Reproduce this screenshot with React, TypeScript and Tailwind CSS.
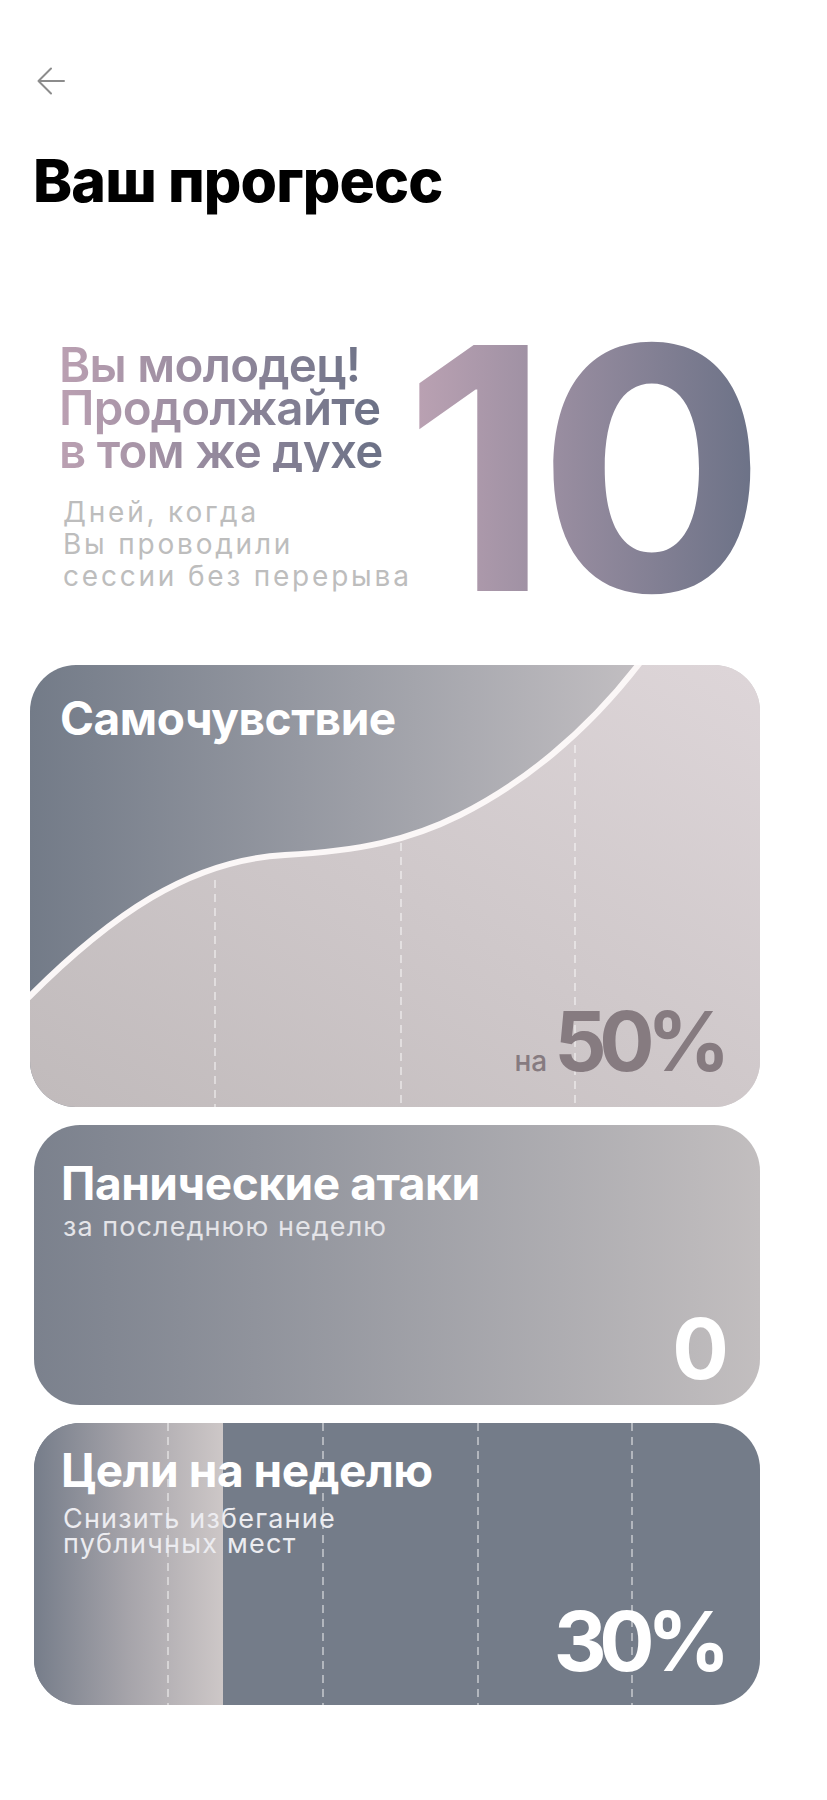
export default function App() {
  const curve =
    "M-5,336 C80,250 160,195 255,190 C330,186 380,175 430,150 C490,120 555,70 612,-5";
  return (
    <div className="w-[827px] min-h-[1800px] bg-white font-[family-name:Inter,sans-serif]">
      <div className="pt-[67px] pl-[37px]">
        <svg width="28" height="28" viewBox="0 0 28 28" fill="none" stroke="#8c8c8c" strokeWidth="2" strokeLinecap="round" strokeLinejoin="round">
          <path d="M27 14H1.5M14 1.5L1.5 14L14 26.5" />
        </svg>
      </div>
      <h1 className="mt-[57px] ml-[33px] font-extrabold text-[59px] leading-[58px] text-black tracking-[-0.015em]">
        Ваш прогресс
      </h1>

      <div className="mt-[92px] flex">
        <div className="ml-[59px] w-[345px] shrink-0 pt-[41px]">
          <div className="w-fit whitespace-nowrap text-[47.5px] leading-[43px] font-semibold tracking-[-0.015em] bg-linear-to-r from-[#bba0b2] to-[#6b7186] bg-clip-text text-transparent">
            Вы молодец!
            <br />
            Продолжайте
            <br />
            в том же духе
          </div>
          <div className="mt-[24px] ml-[4px] whitespace-nowrap text-[28px] leading-[32px] text-[#bdbdbd] tracking-[0.1em]">
            Дней, когда
            <br />
            Вы проводили
            <br />
            сессии без перерыва
          </div>
        </div>
        <div className="-mt-[2px] text-[338px] leading-[338px] font-bold tracking-[-0.035em] bg-linear-to-r from-[#bda3b4] to-[#6c7287] bg-clip-text text-transparent">
          10
        </div>
      </div>

      <div className="mt-[27px] flex flex-col gap-[18px]">
        <div className="relative ml-[30px] w-[730px] h-[442px] rounded-[46px] overflow-hidden bg-linear-to-r from-[#737b88] to-[#d2cccd]">
          <svg className="absolute inset-0" width="730" height="442" viewBox="0 0 730 442">
            <defs>
              <linearGradient id="low" x1="0" y1="1" x2="1" y2="0">
                <stop offset="0" stopColor="#c0babb" />
                <stop offset="1" stopColor="#ded6d9" />
              </linearGradient>
            </defs>
            <path d={curve + " L740,-5 L740,450 L-5,450 Z"} fill="url(#low)" />
            <g stroke="#ffffff" strokeOpacity="0.75" strokeWidth="1.2" strokeDasharray="8 6">
              <line x1="185" y1="215" x2="185" y2="442" />
              <line x1="371" y1="178" x2="371" y2="442" />
              <line x1="545" y1="80" x2="545" y2="442" />
            </g>
            <path d={curve} fill="none" stroke="#fbf7f7" strokeWidth="6" />
          </svg>
          <div className="relative flex h-full flex-col justify-between pt-[31px] pl-[30px] pr-[37px] pb-[24px]">
            <div className="text-[46px] leading-[45px] font-bold tracking-[-0.01em] text-white">Самочувствие</div>
            <div className="flex items-baseline justify-end gap-[7px] text-[#867b80]">
              <span className="text-[28px] font-medium">на</span>
              <span className="text-[82px] leading-[82px] font-bold tracking-[-0.09em]">50%</span>
            </div>
          </div>
        </div>

        <div className="ml-[34px] w-[726px] h-[280px] rounded-[46px] bg-linear-to-r from-[#7b818d] to-[#c2bebf] flex flex-col pt-[36px] pl-[27px] pr-[31px] pb-[14px]">
          <div className="text-[46px] leading-[45px] font-bold tracking-[-0.01em] text-white">Панические атаки</div>
          <div className="mt-[6px] ml-[2px] text-[27px] leading-[30px] tracking-[0.04em] text-[#e4e4e8]">за последнюю неделю</div>
          <div className="mt-auto self-end text-[84px] leading-[84px] font-bold text-white">0</div>
        </div>

        <div className="relative ml-[34px] w-[726px] h-[282px] rounded-[46px] overflow-hidden bg-[#747c89]">
          <svg className="absolute inset-0" width="726" height="282" viewBox="0 0 726 282">
            <defs>
              <linearGradient id="strip" x1="0" y1="0" x2="1" y2="0">
                <stop offset="0" stopColor="#767d8a" />
                <stop offset="0.5" stopColor="#a6a4aa" />
                <stop offset="1" stopColor="#cdc7c7" />
              </linearGradient>
            </defs>
            <rect x="0" y="0" width="189" height="282" fill="url(#strip)" />
            <g stroke="#ffffff" strokeOpacity="0.75" strokeWidth="1.2" strokeDasharray="8 6">
              <line x1="134" y1="0" x2="134" y2="282" />
              <line x1="289" y1="0" x2="289" y2="282" />
              <line x1="444" y1="0" x2="444" y2="282" />
              <line x1="598" y1="0" x2="598" y2="282" />
            </g>
          </svg>
          <div className="relative flex h-full flex-col pt-[25px] pl-[27px] pr-[37px] pb-[22px]">
            <div className="text-[46px] leading-[45px] font-bold tracking-[-0.01em] text-white">Цели на неделю</div>
            <div className="mt-[13px] ml-[2px] text-[27px] leading-[25px] tracking-[0.045em] text-[#ececf0]">
              Снизить избегание
              <br />
              публичных мест
            </div>
            <div className="mt-auto self-end text-[82px] leading-[82px] font-bold tracking-[-0.09em] text-white">30%</div>
          </div>
        </div>
      </div>
    </div>
  );
}
